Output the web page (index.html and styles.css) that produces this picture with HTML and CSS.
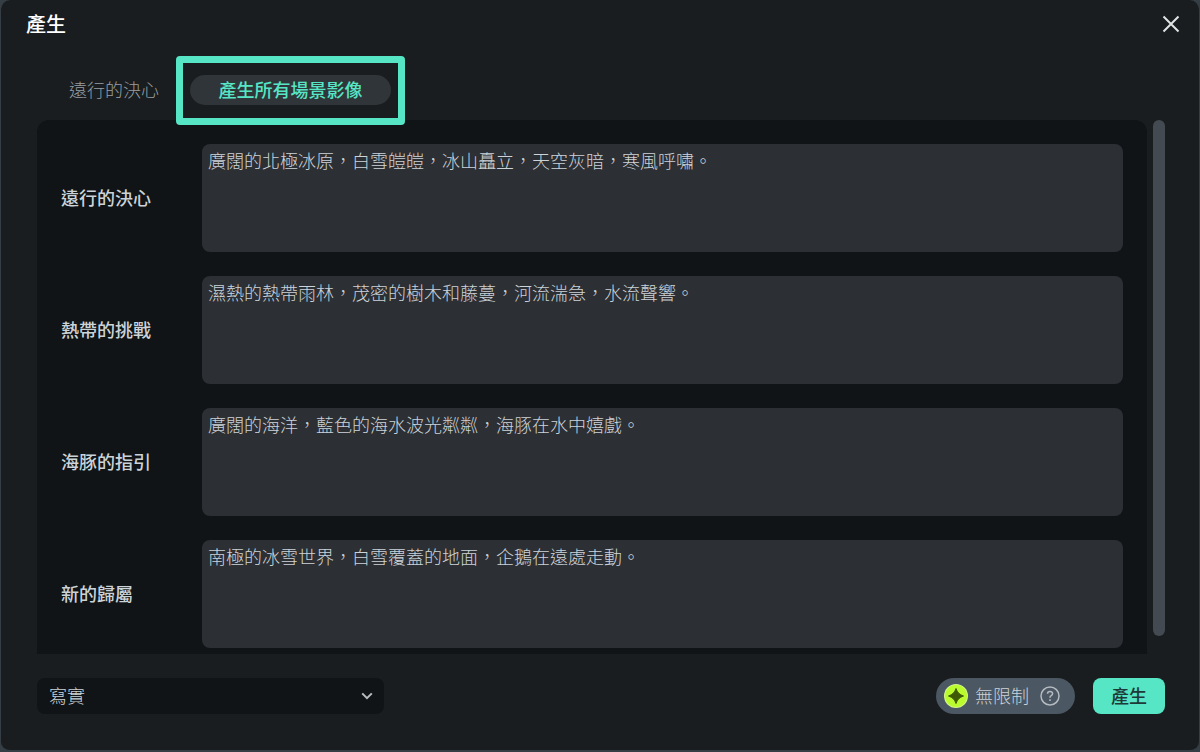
FILE: index.html
```html
<!DOCTYPE html>
<html lang="zh-Hant">
<head>
  <meta charset="UTF-8" />
  <meta name="viewport" content="width=device-width, initial-scale=1.0" />
  <title>產生</title>
  <link rel="stylesheet" href="styles.css">
</head>
<body>
  <main class="dialog">
    <header>
      <h1>產生</h1>
      <button class="close" type="button" aria-label="關閉">
        <svg width="18" height="18" viewBox="0 0 18 18"><path d="M1.5 1.5l15 15M16.5 1.5l-15 15" /></svg>
      </button>
    </header>

    <nav class="tabs">
      <button class="tab" type="button">遠行的決心</button>
      <button class="tab active" type="button">產生所有場景影像</button>
    </nav>

    <div class="content">
      <div class="scenes">
        <div class="scene">
          <label for="scene1">遠行的決心</label>
          <textarea id="scene1">廣闊的北極冰原，白雪皚皚，冰山矗立，天空灰暗，寒風呼嘯。</textarea>
        </div>
        <div class="scene">
          <label for="scene2">熱帶的挑戰</label>
          <textarea id="scene2">濕熱的熱帶雨林，茂密的樹木和藤蔓，河流湍急，水流聲響。</textarea>
        </div>
        <div class="scene">
          <label for="scene3">海豚的指引</label>
          <textarea id="scene3">廣闊的海洋，藍色的海水波光粼粼，海豚在水中嬉戲。</textarea>
        </div>
        <div class="scene">
          <label for="scene4">新的歸屬</label>
          <textarea id="scene4">南極的冰雪世界，白雪覆蓋的地面，企鵝在遠處走動。</textarea>
        </div>
      </div>
      <div class="scrollbar"></div>
    </div>

    <footer>
      <div class="style-select">
        <select aria-label="風格">
          <option>寫實</option>
        </select>
        <svg width="12" height="8" viewBox="0 0 12 8"><path d="M1.2 1.4L6 6.2l4.8-4.8" /></svg>
      </div>
      <div class="credits">
        <svg class="coin" width="24" height="24" viewBox="0 0 24 24">
          <circle cx="12" cy="12" r="12" fill="#d3f58c" />
          <circle cx="12" cy="12" r="11" fill="#b9fb2c" />
          <path d="M12 4.500c1.300 4 3.500 6.200 7.500 7.500-4 1.300-6.200 3.500-7.500 7.500-1.300-4-3.500-6.200-7.500-7.500 4-1.300 6.200-3.500 7.500-7.500z" fill="#3f5a06" stroke="#3f5a06" stroke-linejoin="round" />
        </svg>
        <span>無限制</span>
        <svg class="help" width="20" height="20" viewBox="0 0 20 20">
          <circle cx="10" cy="10" r="9" />
          <path d="M7.600 7.800V7.400Q7.600 5.500 10 5.500T12.600 7.600Q12.600 8.900 11.300 9.600T10 11.400V11.800M10 13.300V14.900" />
        </svg>
      </div>
      <button class="generate" type="button">產生</button>
    </footer>
  </main>
</body>
</html>
```

FILE: styles.css
```css
:root {
  --bg: #191d1f;
  --panel: #101416;
  --field: #2c2f34;
  --frame: #363e45;
  --accent: #56e6c6;
  --text: #ccd3d8;
}
* {
  box-sizing: border-box;
}
body {
  margin: 0;
  background: var(--frame);
  color: var(--text);
  font-family: "Noto Sans CJK TC", sans-serif;
  font-size: 18px;
  line-height: 24px;
}
button, select, textarea {
  font: inherit;
  color: inherit;
  border: none;
  padding: 0;
}
button {
  cursor: pointer;
}
.dialog {
  display: flex;
  flex-direction: column;
  height: 100vh;
  padding: 0 34px 36px 36px;
  background: var(--bg);
  border: 1px solid var(--frame);
  border-width: 0 1px 2px 1px;
  border-radius: 10px;
}
header {
  display: flex;
  justify-content: space-between;
  align-items: center;
  height: 48px;
  margin: 0 -15px 0 -11px;
}
h1 {
  margin: 0;
  color: #fff;
  font-size: 20px;
  font-weight: 500;
}
.close {
  display: flex;
  background: none;
}
.close svg {
  fill: none;
  stroke: #e0e3e4;
  stroke-width: 2;
}
.tabs {
  display: flex;
  align-items: center;
  gap: 31px;
  height: 84px;
  margin-bottom: -12px;
  padding-left: 32px;
}
.tab {
  height: 30px;
  padding-bottom: 2px;
  background: none;
  color: #979da2;
  font-weight: 300;
}
.tab.active {
  position: relative;
  width: 201px;
  border-radius: 15px;
  background: #303539;
  color: var(--accent);
  font-weight: 500;
}
/* highlight frame around the active tab */
.tab.active::after {
  content: "";
  position: absolute;
  inset: -19px -14px -20px -14px;
  border: 7px solid var(--accent);
  border-radius: 4px;
}
.content {
  display: flex;
  flex: 1;
  gap: 6px;
  min-height: 0;
}
.scenes {
  display: flex;
  flex: 1;
  flex-direction: column;
  gap: 24px;
  padding: 24px;
  overflow: hidden;
  background: var(--panel);
  border-radius: 12px 12px 0 0;
}
.scene {
  display: flex;
  flex-shrink: 0;
  align-items: center;
}
.scene label {
  width: 141px;
  padding-bottom: 2px;
  font-weight: 500;
}
.scene textarea {
  flex: 1;
  height: 108px;
  padding: 4px 6px;
  background: var(--field);
  border-radius: 8px;
  font-weight: 300;
  resize: none;
}
.scrollbar {
  width: 12px;
  margin-bottom: 18px;
  border-radius: 6px;
  background: #434a51;
}
footer {
  display: flex;
  align-items: center;
  margin-top: 24px;
}
.style-select {
  position: relative;
  width: 347px;
  margin-right: auto;
}
.style-select select {
  display: block;
  width: 100%;
  height: 36px;
  padding: 0 12px 2px;
  appearance: none;
  background: var(--panel);
  border-radius: 8px;
  font-weight: 300;
}
.style-select svg {
  position: absolute;
  top: 14px;
  right: 11px;
  fill: none;
  stroke: #b8bdc0;
  stroke-width: 2;
  pointer-events: none;
}
.credits {
  display: flex;
  align-items: center;
  height: 36px;
  margin-right: 18px;
  padding: 0 15px 0 8px;
  border-radius: 18px;
  background: #4b5762;
  font-weight: 300;
}
.credits span {
  margin: 0 11px 0 7px;
  padding-bottom: 2px;
}
.help {
  fill: none;
  stroke: #b4bbc1;
  stroke-width: 1.5;
}
.generate {
  width: 72px;
  height: 36px;
  padding-bottom: 2px;
  border-radius: 8px;
  background: var(--accent);
  color: #1e3a38;
  font-weight: 500;
}
```
